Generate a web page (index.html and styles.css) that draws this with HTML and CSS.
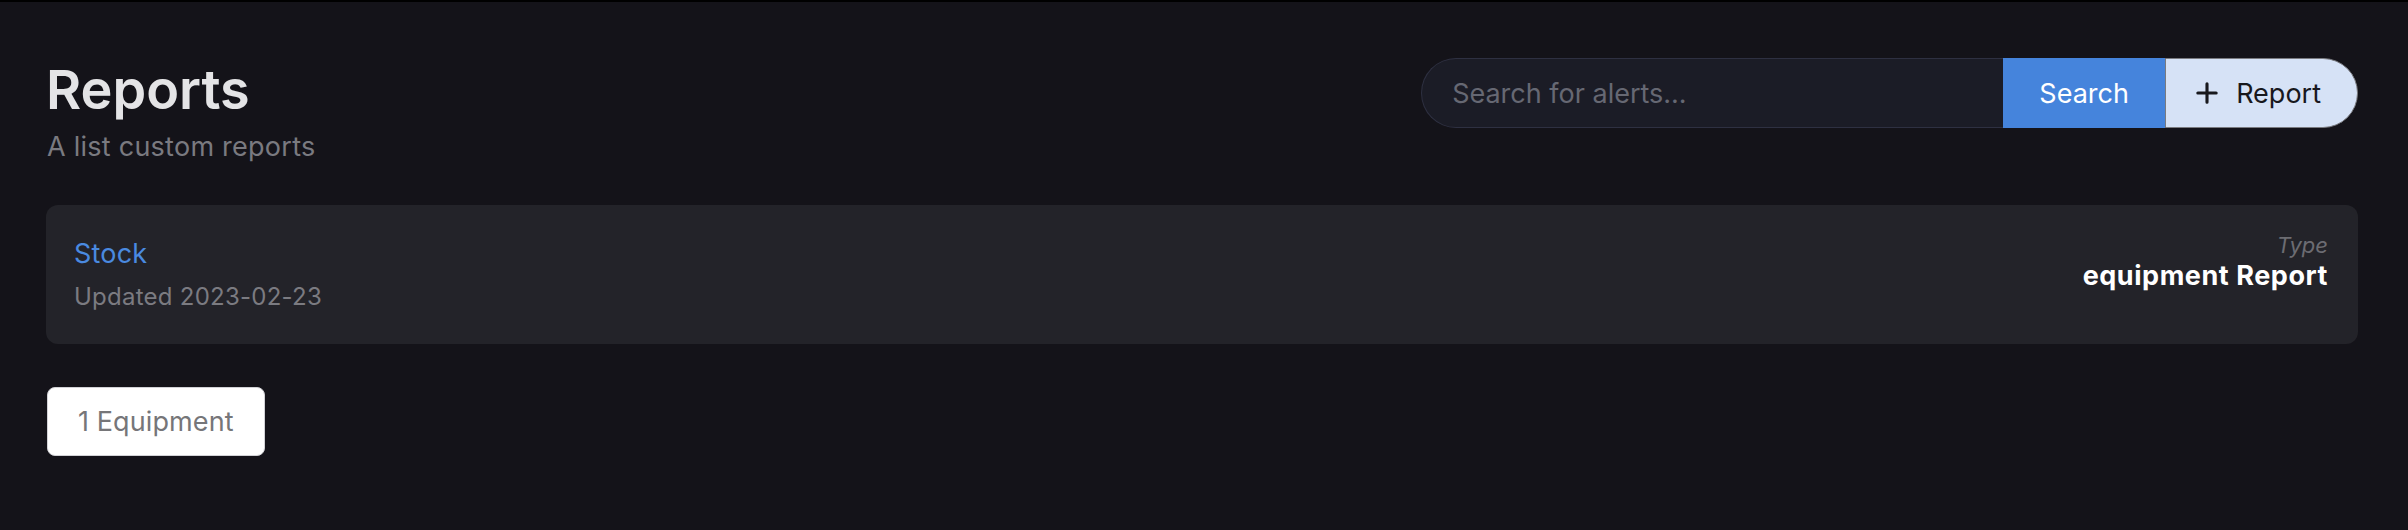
FILE: index.html
```html
<!DOCTYPE html>
<html lang="en">
<head>
<meta charset="utf-8">
<title>Reports</title>
<link rel="stylesheet" href="styles.css">
</head>
<body>
<main class="page">
  <header class="header">
    <div class="heading">
      <h1 class="title">Reports</h1>
      <p class="subtitle">A list custom reports</p>
    </div>
    <form class="search-group">
      <input class="search-input" type="text" placeholder="Search for alerts...">
      <button class="btn-search" type="button">Search</button>
      <button class="btn-report" type="button">
        <svg class="plus" viewBox="0 0 24 24" width="22" height="22" aria-hidden="true"><path d="M12 2v20M2 12h20" stroke="currentColor" stroke-width="3.4" stroke-linecap="round" fill="none"/></svg>
        <span>Report</span>
      </button>
    </form>
  </header>

  <section class="card">
    <div class="card-left">
      <a class="card-name" href="#">Stock</a>
      <div class="card-date">Updated 2023-02-23</div>
    </div>
    <div class="card-right">
      <div class="card-label">Type</div>
      <div class="card-type">equipment Report</div>
    </div>
  </section>

  <div class="count-row">
    <span class="count-badge">1 Equipment</span>
  </div>
</main>
</body>
</html>
```

FILE: styles.css
```css
* { box-sizing: border-box; }

html, body {
  margin: 0;
  padding: 0;
  background: #141319;
}

body {
  border-top: 2px solid #000;
  font-family: Inter, "Noto Sans", "Liberation Sans", sans-serif;
  min-height: 530px;
}

.page {
  padding: 56px 50px 40px 46px;
}

.header {
  display: flex;
  justify-content: space-between;
  align-items: flex-start;
}

.heading {
  padding-top: 2px;
}

.title {
  margin: 0;
  font-size: 54px;
  line-height: 60px;
  font-weight: 600;
  color: #e4e4e6;
}

.subtitle {
  margin: 6px 0 0 1px;
  font-size: 27px;
  line-height: 42px;
  color: #7a7a80;
  letter-spacing: 0.25px;
}

.search-group {
  display: flex;
  height: 70px;
  margin: 0;
}

.search-input {
  width: 582px;
  height: 100%;
  padding: 0 20px 0 30px;
  background: #1b1c26;
  border: 1.5px solid #2e3041;
  border-right: none;
  border-radius: 9999px 0 0 9999px;
  color: #d0d0d4;
  font-family: inherit;
  font-size: 27px;
  outline: none;
}

.search-input::placeholder {
  color: #666873;
}

.btn-search {
  width: 162px;
  height: 100%;
  border: none;
  background: #4584dc;
  color: #ffffff;
  font-family: inherit;
  font-size: 27px;
  padding: 0;
  cursor: pointer;
}

.btn-report {
  display: flex;
  align-items: center;
  gap: 18px;
  height: 100%;
  padding: 0 36px 0 30px;
  background: #d6e2f6;
  color: #18181d;
  border: 1.5px solid #7a7b80;
  border-radius: 0 9999px 9999px 0;
  font-family: inherit;
  font-size: 27px;
  cursor: pointer;
}

.plus {
  display: block;
  flex: none;
}

.card {
  display: flex;
  justify-content: space-between;
  align-items: flex-start;
  margin-top: 37px;
  height: 139px;
  padding: 28px 30px 28px 28px;
  background: #232329;
  border-radius: 12px;
}

.card-left {
  display: flex;
  flex-direction: column;
  gap: 4px;
}

.card-name {
  font-size: 27px;
  line-height: 42px;
  color: #4a8ae0;
  text-decoration: none;
  letter-spacing: 0.2px;
}

.card-date {
  font-size: 24px;
  line-height: 36px;
  color: #7b7b81;
  letter-spacing: 0.25px;
}

.card-right {
  text-align: right;
}

.card-label {
  font-size: 22px;
  line-height: 24px;
  font-style: italic;
  color: #6c6c72;
}

.card-type {
  font-size: 27px;
  line-height: 36px;
  font-weight: 700;
  color: #ffffff;
  margin-top: 1px;
  letter-spacing: 0.55px;
}

.count-row {
  display: flex;
  margin-top: 43px;
  padding-left: 1px;
}

.count-badge {
  display: inline-flex;
  align-items: center;
  height: 69px;
  padding: 0 30px;
  background: #ffffff;
  border: 1.5px solid #d2d2d6;
  border-radius: 8px;
  font-size: 27px;
  color: #767679;
  letter-spacing: 0.1px;
}
```
